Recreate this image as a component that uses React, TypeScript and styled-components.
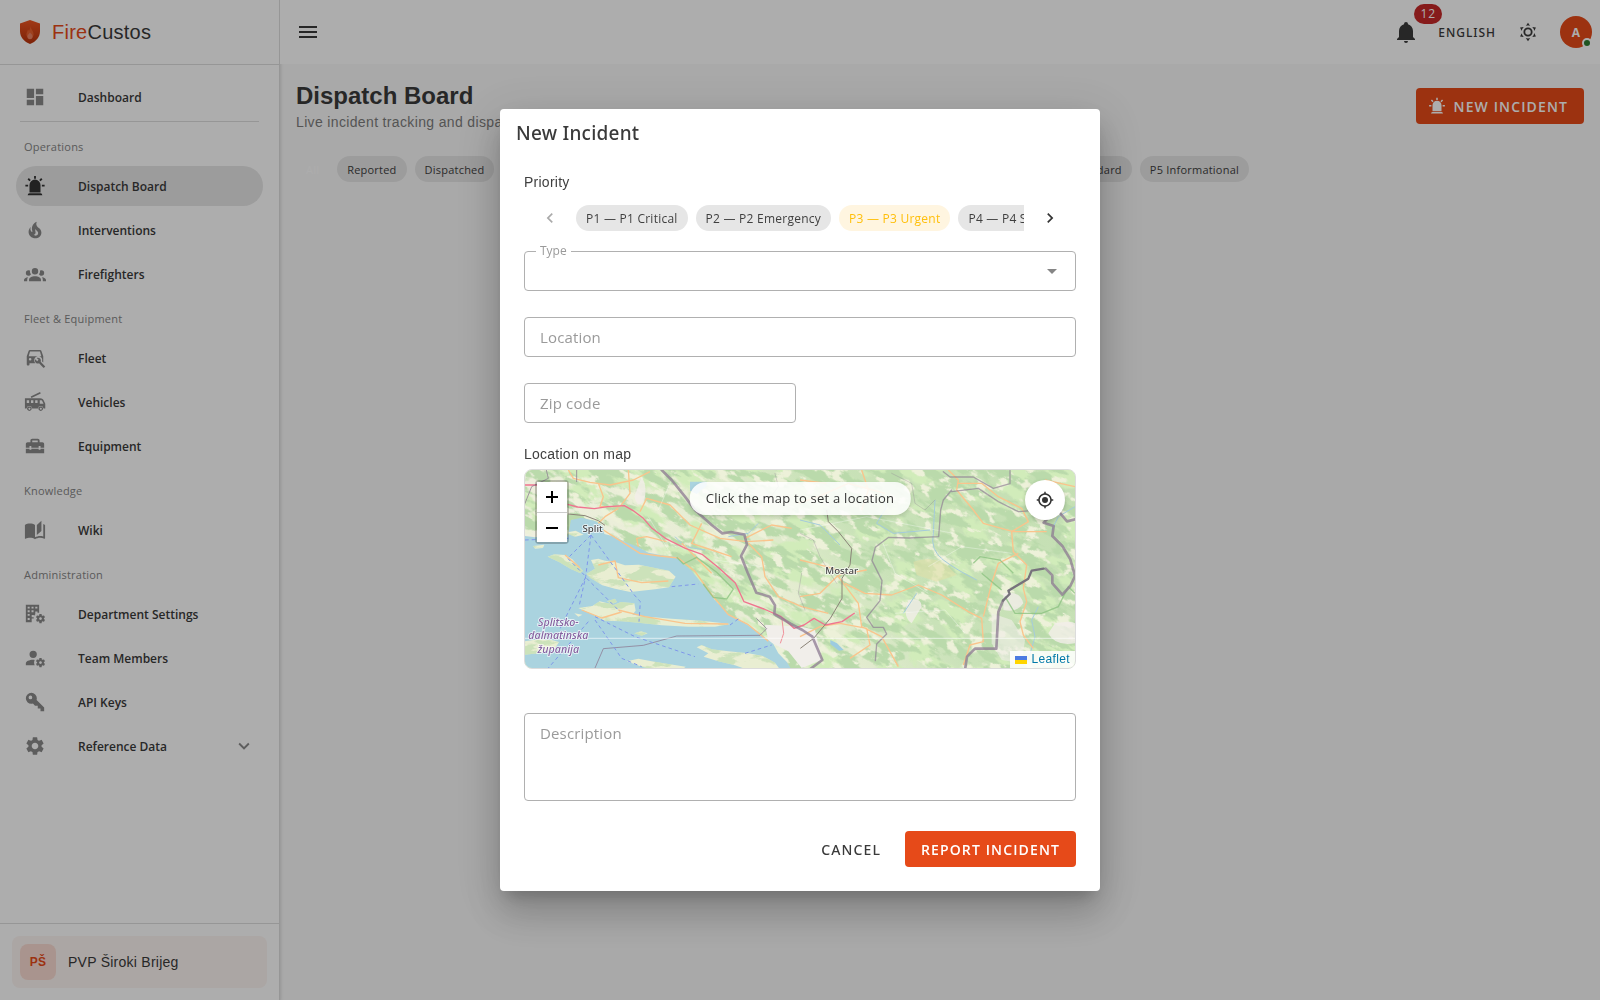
import React from "react";
import styled, { createGlobalStyle } from "styled-components";
import { MdSettings } from "react-icons/md";

const sans = `"Open Sans", "Noto Sans", sans-serif`;
const medium = `"Noto Sans", "Open Sans", sans-serif`;
const heading = `"Liberation Sans", Arial, sans-serif`;
const primary = "#e64a19";

const Global = createGlobalStyle`
  *, *::before, *::after { box-sizing: border-box; }
  body { margin: 0; background: #fafafa; color: #3a3a3a; font-family: ${sans}; font-size: 14px; }
  button, input, select, textarea { font: inherit; color: inherit; margin: 0; }
  button { border: 0; background: none; padding: 0; cursor: pointer; }
  a { color: inherit; text-decoration: none; }
  h1, h2, p { margin: 0; }
`;

/* ---------- icons ---------- */

const COG =
  "M17 12C16.87 12 16.76 12.09 16.74 12.21L16.55 13.53C16.25 13.66 15.96 13.82 15.7 14L14.46 13.5C14.35 13.5 14.22 13.5 14.15 13.63L13.15 15.36C13.09 15.47 13.11 15.6 13.21 15.68L14.27 16.5C14.25 16.67 14.24 16.83 14.24 17C14.24 17.17 14.25 17.33 14.27 17.5L13.21 18.32C13.12 18.4 13.09 18.53 13.15 18.64L14.15 20.37C14.21 20.5 14.34 20.5 14.46 20.5L15.7 20C15.96 20.18 16.24 20.35 16.55 20.47L16.74 21.79C16.76 21.91 16.86 22 17 22H19C19.11 22 19.22 21.91 19.24 21.79L19.43 20.47C19.73 20.34 20 20.18 20.27 20L21.5 20.5C21.63 20.5 21.76 20.5 21.83 20.37L22.83 18.64C22.89 18.53 22.86 18.4 22.77 18.32L21.7 17.5C21.72 17.33 21.74 17.17 21.74 17C21.74 16.83 21.73 16.67 21.7 16.5L22.76 15.68C22.85 15.6 22.88 15.47 22.82 15.36L21.82 13.63C21.76 13.5 21.63 13.5 21.5 13.5L20.27 14C20 13.82 19.73 13.65 19.42 13.53L19.23 12.21C19.22 12.09 19.11 12 19 12H17M18 15.5C18.83 15.5 19.5 16.17 19.5 17C19.5 17.83 18.83 18.5 18 18.5C17.16 18.5 16.5 17.83 16.5 17C16.5 16.17 17.17 15.5 18 15.5Z";

const paths = {
  dashboard: "M13,3V9H21V3M13,21H21V11H13M3,21H11V15H3M3,13H11V3H3V13Z",
  alarm:
    "M6,6.9L3.87,4.78L5.28,3.37L7.4,5.5L6,6.9M13,1V4H11V1H13M20.13,4.78L18,6.9L16.6,5.5L18.72,3.37L20.13,4.78M4.5,10.5V12.5H1.5V10.5H4.5M19.5,10.5H22.5V12.5H19.5V10.5M6,20H18A2,2 0 0,1 20,22H4A2,2 0 0,1 6,20M12,5A6,6 0 0,1 18,11V19H6V11A6,6 0 0,1 12,5Z",
  fire: "M17.66 11.2C17.43 10.9 17.15 10.64 16.89 10.38C16.22 9.78 15.46 9.35 14.82 8.72C13.33 7.26 13 4.85 13.95 3C13 3.23 12.17 3.75 11.46 4.32C8.87 6.4 7.85 10.07 9.07 13.22C9.11 13.32 9.15 13.42 9.15 13.55C9.15 13.77 9 13.97 8.8 14.05C8.57 14.15 8.33 14.09 8.14 13.93C8.08 13.88 8.04 13.83 8 13.76C6.87 12.33 6.69 10.28 7.45 8.64C5.78 10 4.87 12.3 5 14.47C5.06 14.97 5.12 15.47 5.29 15.97C5.43 16.57 5.7 17.17 6 17.7C7.08 19.43 8.95 20.67 10.96 20.92C13.1 21.19 15.39 20.8 17.03 19.32C18.86 17.66 19.5 15 18.56 12.72L18.43 12.46C18.22 12 17.66 11.2 17.66 11.2M14.5 17.5C14.22 17.74 13.76 18 13.4 18.1C12.28 18.5 11.16 17.94 10.5 17.28C11.69 17 12.4 16.12 12.61 15.23C12.78 14.43 12.46 13.77 12.33 13C12.21 12.26 12.23 11.63 12.5 10.94C12.69 11.32 12.89 11.7 13.13 12C13.9 13 15.11 13.44 15.37 14.8C15.41 14.94 15.43 15.08 15.43 15.23C15.46 16.05 15.1 16.95 14.5 17.5H14.5Z",
  group:
    "M12,5.5A3.5,3.5 0 0,1 15.5,9A3.5,3.5 0 0,1 12,12.5A3.5,3.5 0 0,1 8.5,9A3.5,3.5 0 0,1 12,5.5M5,8C5.56,8 6.08,8.15 6.53,8.42C6.38,9.85 6.8,11.27 7.66,12.38C7.16,13.34 6.16,14 5,14A3,3 0 0,1 2,11A3,3 0 0,1 5,8M19,8A3,3 0 0,1 22,11A3,3 0 0,1 19,14C17.84,14 16.84,13.34 16.34,12.38C17.2,11.27 17.62,9.85 17.47,8.42C17.92,8.15 18.44,8 19,8M5.5,18.25C5.5,16.18 8.41,14.5 12,14.5C15.59,14.5 18.5,16.18 18.5,18.25V20H5.5V18.25M0,20V18.5C0,17.11 1.89,15.94 4.45,15.6C3.86,16.28 3.5,17.22 3.5,18.25V20H0M24,20H20.5V18.25C20.5,17.22 20.14,16.28 19.55,15.6C22.11,15.94 24,17.11 24,18.5V20Z",
  fleet:
    "M6.500 3.200C5.800 3.200 5.300 3.600 5.100 4.200L3 10.200V19.200C3 19.800 3.400 20.200 4 20.200H5C5.600 20.200 6 19.800 6 19.200V17.700H12.400C11.200 16.400 10.900 14.600 11.400 13.100C11.900 11.600 13 10.500 14.600 10.100H5.100L6.600 5H17.400L18.900 10.100H16.600C18.400 10.500 19.800 12 19.900 13.800C19.900 14.400 19.800 15 19.600 15.500L21 16.800V10.200L18.900 4.200C18.700 3.600 18.200 3.200 17.500 3.200H6.500M6.700 12A1.400 1.400 0 0 1 8.100 13.400A1.400 1.400 0 0 1 6.700 14.800A1.400 1.400 0 0 1 5.300 13.400A1.400 1.400 0 0 1 6.700 12M22.900 20.900L18.200 16.200C18.700 15 18.400 13.600 17.500 12.600C16.500 11.600 15 11.400 13.800 11.900L15.900 14L14.400 15.500L12.200 13.400C11.600 14.600 11.900 16.100 12.900 17.100C13.800 18 15.200 18.300 16.400 17.800L21.100 22.500C21.300 22.700 21.600 22.700 21.800 22.500L22.900 21.500C23.200 21.300 23.200 21 22.900 20.900Z",
  truck:
    "M7.300 6L17.500 1.200L18.300 2.600L8.100 7.500ZM1 8H17.500C20 8 21 9 21.800 11L23.200 14V19H21.300A3.100 3.100 0 0 0 15.200 19H8.900A3.100 3.100 0 0 0 2.800 19H1ZM3 10.200V13.200H5.600V10.200ZM7.600 10.200V13.200H10.200V10.200ZM12.200 10.200V13.200H14.800V10.200ZM17.200 10.200V14H21.300L20 11.200C19.600 10.400 19.300 10.200 18.500 10.200ZM5.900 16.800A2.500 2.500 0 1 1 5.800 16.800ZM5.900 18.300A1 1 0 1 0 6 18.300ZM18.300 16.800A2.500 2.500 0 1 1 18.200 16.800ZM18.300 18.300A1 1 0 1 0 18.400 18.300Z",
  toolbox:
    "M18 16H16V15H8V16H6V15H2V20H22V15H18V16M20 8H17V6C17 4.9 16.1 4 15 4H9C7.9 4 7 4.9 7 6V8H4C2.9 8 2 8.9 2 10V14H6V12H8V14H16V12H18V14H22V10C22 8.9 21.1 8 20 8M15 8H9V6H15V8Z",
  book: "M19 2L14 6.5V17.5L19 13V2M6.5 5C4.55 5 2.45 5.4 1 6.5V21.16C1 21.41 1.25 21.66 1.5 21.66C1.6 21.66 1.65 21.59 1.75 21.59C3.1 20.94 5.05 20.5 6.5 20.5C8.45 20.5 10.55 20.9 12 22C13.35 21.15 15.8 20.5 17.5 20.5C19.15 20.5 20.85 20.81 22.25 21.56C22.35 21.61 22.4 21.59 22.5 21.59C22.75 21.59 23 21.34 23 21.09V6.5C22.4 6.05 21.75 5.75 21 5.5V19C19.9 18.65 18.7 18.5 17.5 18.5C15.8 18.5 13.35 19.15 12 20V6.5C10.55 5.4 8.45 5 6.5 5Z",
  building:
    "M2 2H16.5V10.6H14.7V9.4H12.3V12.2L10.8 14.2V13H8.4V15.6H10.6V17H8.4V21H2ZM4 4V6H6.2V4ZM8.2 4V6H10.4V4ZM12.3 4V6H14.6V4ZM4 8V10H6.2V8ZM8.2 8V10H10.4V8ZM4 12V14H6.2V12ZM4 16.4V18.6H6.2V16.4Z " + COG,
  accountCog:
    "M10 4A4 4 0 0 0 6 8A4 4 0 0 0 10 12A4 4 0 0 0 14 8A4 4 0 0 0 10 4M10 14C5.58 14 2 15.79 2 18V20H11.68A7 7 0 0 1 11 17A7 7 0 0 1 11.64 14.09C11.11 14.03 10.56 14 10 14Z " + COG,
  key: "M22,18V22H18V19H15V16H12L9.74,13.74C9.19,13.91 8.61,14 8,14A6,6 0 0,1 2,8A6,6 0 0,1 8,2A6,6 0 0,1 14,8C14,8.61 13.91,9.19 13.74,9.74L22,18M7,5A2,2 0 0,0 5,7A2,2 0 0,0 7,9A2,2 0 0,0 9,7A2,2 0 0,0 7,5Z",
  down: "M7.41,8.58L12,13.17L16.59,8.58L18,10L12,16L6,10L7.41,8.58Z",
  left: "M15.41,16.58L10.83,12L15.41,7.41L14,6L8,12L14,18L15.41,16.58Z",
  right: "M8.59,16.58L13.17,12L8.59,7.41L10,6L16,12L10,18L8.59,16.58Z",
  menu: "M3,6H21V8H3V6M3,11H21V13H3V11M3,16H21V18H3V16Z",
  bell: "M21,19V20H3V19L5,17V11C5,7.9 7.03,5.17 10,4.29C10,4.19 10,4.1 10,4A2,2 0 0,1 12,2A2,2 0 0,1 14,4C14,4.1 14,4.19 14,4.29C16.97,5.17 19,7.9 19,11V17L21,19M14,21A2,2 0 0,1 12,23A2,2 0 0,1 10,21",
  sun: "M12,7A5,5 0 0,1 17,12A5,5 0 0,1 12,17A5,5 0 0,1 7,12A5,5 0 0,1 12,7M12,9A3,3 0 0,0 9,12A3,3 0 0,0 12,15A3,3 0 0,0 15,12A3,3 0 0,0 12,9M12,2L14.39,5.42C13.65,5.15 12.84,5 12,5C11.16,5 10.35,5.15 9.61,5.42L12,2M3.34,7L7.5,6.65C6.9,7.16 6.36,7.78 5.94,8.5C5.5,9.24 5.25,10 5.11,10.79L3.34,7M3.36,17L5.12,13.23C5.26,14 5.53,14.78 5.95,15.5C6.37,16.24 6.91,16.86 7.5,17.37L3.36,17M20.65,7L18.88,10.79C18.74,10 18.47,9.23 18.05,8.5C17.63,7.78 17.1,7.15 16.5,6.64L20.65,7M20.64,17L16.5,17.36C17.09,16.85 17.62,16.22 18.04,15.5C18.46,14.77 18.73,14 18.87,13.21L20.64,17M12,22L9.59,18.56C10.33,18.83 11.14,19 12,19C12.82,19 13.63,18.83 14.37,18.56L12,22Z",
  gps: "M12,8A4,4 0 0,1 16,12A4,4 0 0,1 12,16A4,4 0 0,1 8,12A4,4 0 0,1 12,8M3.05,13H1V11H3.05C3.5,6.83 6.83,3.5 11,3.05V1H13V3.05C17.17,3.5 20.5,6.83 20.95,11H23V13H20.95C20.5,17.17 17.17,20.5 13,20.95V23H11V20.95C6.83,20.5 3.5,17.17 3.05,13M12,5A7,7 0 0,0 5,12A7,7 0 0,0 12,19A7,7 0 0,0 19,12A7,7 0 0,0 12,5Z",
  caret: "M7,10L12,15L17,10H7Z",
};

type IconName = keyof typeof paths;

const Svg = styled.svg`
  display: block;
  flex: none;
`;

const Icon = ({ name, size = 24 }: { name: IconName; size?: number }) => (
  <Svg width={size} height={size} viewBox="0 0 24 24" fill="currentColor" fillRule="evenodd" aria-hidden="true">
    <path d={paths[name]} />
  </Svg>
);

/* ---------- shell ---------- */

const Shell = styled.div`
  display: flex;
  min-height: 100vh;
`;

const Sidebar = styled.aside`
  width: 280px;
  flex: none;
  display: flex;
  flex-direction: column;
  background: #fff;
  border-right: 1px solid #dedede;
  box-shadow: 0 2px 4px rgba(0, 0, 0, 0.2);
`;

const Brand = styled.a`
  display: flex;
  align-items: center;
  gap: 12px;
  height: 65px;
  padding: 0 20px;
  border-bottom: 1px solid #dedede;
  font-family: ${heading};
  font-size: 20px;
  letter-spacing: 0.0125em;
  color: #3a3a3a;
  em {
    font-style: normal;
    color: ${primary};
  }
`;

const Nav = styled.nav`
  flex: 1;
  padding: 12px 16px;
`;

const NavItem = styled.a<{ $active?: boolean }>`
  display: flex;
  align-items: center;
  height: 40px;
  margin-bottom: 4px;
  padding: 0 8px;
  border-radius: 20px;
  background: ${(p) => (p.$active ? "#e6e6e6" : "transparent")};
  color: ${(p) => (p.$active ? "#333" : "#8a8a8a")};
  font-size: 12px;
  font-weight: 600;
`;

const NavText = styled.span`
  flex: 1;
  margin-left: 32px;
  color: #3a3a3a;
`;

const NavDivider = styled.hr`
  margin: 0 4px 4px;
  border: 0;
  border-top: 1px solid #dedede;
`;

const NavHeading = styled.h2`
  height: 40px;
  padding-left: 8px;
  font-size: 11px;
  font-weight: 400;
  letter-spacing: 0.02em;
  line-height: 42px;
  color: #858585;
`;

const Account = styled.div`
  padding: 12px;
  border-top: 1px solid #dedede;
`;

const AccountButton = styled.button`
  display: flex;
  align-items: center;
  gap: 12px;
  width: 100%;
  padding: 8px;
  border-radius: 8px;
  background: #fdf5f2;
  font-family: ${heading};
  font-size: 14px;
  letter-spacing: 0.018em;
`;

const AccountBadge = styled.span`
  display: grid;
  place-items: center;
  width: 36px;
  height: 36px;
  border-radius: 8px;
  background: #fadbd1;
  color: ${primary};
  font-size: 12px;
  font-weight: 700;
`;

const Main = styled.div`
  flex: 1;
  min-width: 0;
`;

const TopBar = styled.header`
  display: flex;
  align-items: center;
  height: 64px;
  padding: 0 8px 0 16px;
  background: #fff;
  color: #3a3a3a;
`;

const IconButton = styled.button`
  position: relative;
  display: grid;
  place-items: center;
  width: 24px;
  height: 24px;
`;

const Tools = styled.div`
  display: flex;
  align-items: center;
  gap: 20px;
  margin-left: auto;
`;

const Count = styled.span`
  position: absolute;
  left: 20px;
  bottom: 20px;
  min-width: 28px;
  height: 20px;
  border-radius: 10px;
  background: #c62828;
  color: #fff;
  font-size: 12px;
  letter-spacing: 0.08em;
  line-height: 20px;
  text-align: center;
`;

const Language = styled.button`
  font-family: ${medium};
  font-size: 12px;
  font-weight: 500;
  letter-spacing: 0.08em;
`;

const Avatar = styled.button`
  position: relative;
  width: 32px;
  height: 32px;
  border-radius: 50%;
  background: ${primary};
  color: #fff;
  font-size: 12px;
  font-weight: 700;
  &::after {
    content: "";
    position: absolute;
    right: 0;
    bottom: 0;
    width: 10px;
    height: 10px;
    border: 2px solid #fff;
    border-radius: 50%;
    background: #2e7d32;
  }
`;

const Page = styled.main`
  padding: 16px;
`;

const PageHead = styled.div`
  display: flex;
  align-items: center;
  justify-content: space-between;
  margin-bottom: 24px;
`;

const PageTitle = styled.h1`
  font-family: ${heading};
  font-size: 24px;
  font-weight: 700;
  line-height: 32px;
  color: #3a3a3a;
`;

const PageNote = styled.p`
  font-family: ${heading};
  font-size: 14px;
  letter-spacing: 0.025em;
  line-height: 20px;
  color: #7d7d7d;
`;

const SolidButton = styled.button<{ $icon?: boolean }>`
  display: inline-flex;
  align-items: center;
  gap: 8px;
  height: 36px;
  padding: 0 16px 0 ${(p) => (p.$icon ? "12px" : "16px")};
  border-radius: 4px;
  background: ${primary};
  color: #fff;
  font-size: 14px;
  font-weight: 600;
  letter-spacing: 0.08em;
`;

const TextButton = styled(SolidButton)`
  background: transparent;
  color: #3a3a3a;
  font-family: ${medium};
  font-weight: 500;
`;

const ChipRow = styled.div`
  display: flex;
  justify-content: space-between;
  max-width: 953px;
`;

const ChipGroup = styled.div`
  display: flex;
  gap: 8px;
`;

const Chip = styled.button<{ $tone?: "ghost" | "amber"; $size?: number }>`
  flex: none;
  height: 26px;
  padding: 0 10px;
  border-radius: 13px;
  font-size: ${(p) => p.$size ?? 11}px;
  white-space: nowrap;
  letter-spacing: 0.02em;
  background: ${(p) => (p.$tone === "ghost" ? "transparent" : p.$tone === "amber" ? "#fff5e0" : "#e6e6e6")};
  color: ${(p) => (p.$tone === "ghost" ? "#fff" : p.$tone === "amber" ? "#ffbf0a" : "#3f3f3f")};
`;

const Empty = styled.p`
  margin-top: 224px;
  text-align: center;
  font-family: ${heading};
  font-size: 16px;
  color: #555;
`;

/* ---------- dialog ---------- */

const Scrim = styled.div`
  position: fixed;
  inset: 0;
  display: grid;
  place-items: center;
  background: rgba(0, 0, 0, 0.32);
`;

const Dialog = styled.section`
  width: min(600px, 100% - 48px);
  border-radius: 4px;
  background: #fff;
  box-shadow: 0 11px 15px -7px rgba(0, 0, 0, 0.2), 0 24px 38px 3px rgba(0, 0, 0, 0.14),
    0 9px 46px 8px rgba(0, 0, 0, 0.12);
`;

const DialogTitle = styled.h2`
  padding: 8px 16px;
  font-family: ${medium};
  font-size: 19px;
  font-weight: 500;
  letter-spacing: 0.0125em;
  line-height: 32px;
  color: #3a3a3a;
`;

const Form = styled.form`
  display: flex;
  flex-direction: column;
  padding: 16px 24px 24px;
`;

const Caption = styled.p`
  font-family: ${heading};
  font-size: 14px;
  letter-spacing: 0.018em;
  line-height: 18px;
  color: #3f3f3f;
`;

const Slider = styled.div`
  display: grid;
  grid-template-columns: 52px 1fr 52px;
  align-items: center;
  margin: 14px 0 20px;
`;

const Arrow = styled.button<{ $dim?: boolean }>`
  display: grid;
  place-items: center;
  height: 26px;
  color: ${(p) => (p.$dim ? "#aaa" : "#333")};
`;

const Track = styled.div`
  display: flex;
  gap: 8px;
  overflow: hidden;
`;

const Field = styled.div<{ $half?: boolean }>`
  position: relative;
  width: ${(p) => (p.$half ? "272px" : "100%")};
  margin-bottom: ${(p) => (p.$half ? "22px" : "26px")};
`;

const outline = `
  display: block;
  width: 100%;
  border: 1px solid #b0b0b0;
  border-radius: 4px;
  background: transparent;
  padding: 0 15px;
  font-size: 15px;
  letter-spacing: 0.01em;
  outline: none;
  &::placeholder { color: #9a9a9a; opacity: 1; }
`;

const Input = styled.input`
  ${outline}
  height: 40px;
`;

const Select = styled.select`
  ${outline}
  height: 40px;
  appearance: none;
`;

const Area = styled.textarea`
  ${outline}
  height: 88px;
  padding: 7px 15px;
  line-height: 24px;
  resize: none;
`;

const FloatLabel = styled.label`
  position: absolute;
  top: -8px;
  left: 12px;
  padding: 0 4px;
  background: #fff;
  color: #9a9a9a;
  font-size: 12px;
  line-height: 16px;
`;

const CaretBox = styled.span`
  position: absolute;
  top: 8px;
  right: 12px;
  color: #858585;
  pointer-events: none;
`;

const Actions = styled.div`
  display: flex;
  justify-content: flex-end;
  gap: 8px;
  margin-top: 4px;
`;

/* ---------- map ---------- */

const MapBox = styled.div`
  position: relative;
  height: 200px;
  margin: 6px 0 44px;
  border: 1px solid #dcdcdc;
  border-radius: 8px;
  overflow: hidden;
`;

const MapSvg = styled.svg`
  display: block;
  width: 100%;
  height: 100%;
`;

const ZoomBar = styled.div`
  position: absolute;
  top: 10px;
  left: 10px;
  border: 2px solid rgba(0, 0, 0, 0.22);
  border-radius: 4px;
  background-clip: padding-box;
`;

const ZoomButton = styled.button`
  display: grid;
  place-items: center;
  width: 30px;
  height: 30px;
  background: #fff;
  color: #000;
  & + & {
    border-top: 1px solid #ccc;
  }
`;

const MapHint = styled.div`
  position: absolute;
  top: 12px;
  left: 50%;
  transform: translateX(-50%);
  padding: 0 16px;
  border-radius: 16px;
  background: rgba(255, 255, 255, 0.86);
  box-shadow: 0 2px 4px rgba(0, 0, 0, 0.14);
  font-size: 13px;
  letter-spacing: 0.018em;
  line-height: 33px;
  white-space: nowrap;
  color: #333;
`;

const Locate = styled.button`
  position: absolute;
  top: 10px;
  right: 10px;
  display: grid;
  place-items: center;
  width: 40px;
  height: 40px;
  border-radius: 50%;
  background: #fff;
  box-shadow: 0 2px 4px rgba(0, 0, 0, 0.2);
  color: #333;
`;

const Attribution = styled.a`
  position: absolute;
  right: 0;
  bottom: 0;
  display: flex;
  align-items: center;
  gap: 4px;
  padding: 0 5px;
  background: rgba(255, 255, 255, 0.85);
  color: #0078a8;
  font-family: ${heading};
  font-size: 12px;
  letter-spacing: 0.03em;
  line-height: 17px;
`;

const SEA =
  "M30 288L60 292 110 288 158 290 168 240 200 233 240 243 264 258 268 282 300 290 330 305 368 320 400 338 440 346 482 350 505 372 530 392 560 430 580 455 597 478 640 522 690 550 735 580 775 612 790 640 815 665 830 690H30Z";
const ISLANDS =
  "M98 350L118 343 150 345 172 358 190 378 204 392 196 400 166 386 132 366ZM214 402L240 386 228 360 250 356 270 362 300 366 330 376 372 374 420 384 462 392 482 410 470 428 462 442 420 448 380 452 346 456 300 446 262 436 226 414ZM190 504L232 498 254 484 298 494 318 486 358 490 362 512 352 524 400 530 470 536 560 542 646 552 600 560 520 560 440 556 370 548 320 544 270 542 230 522ZM276 484L300 476 306 486 290 492ZM358 580L378 574 398 580 380 587ZM545 622L560 615 590 628 640 634 700 640 744 648 780 668 796 690H700L660 676 610 664 566 650 580 640ZM30 604L70 598 110 600 132 606 118 628 70 640 30 644ZM335 664L370 656 410 664 460 672 512 680 500 690H420L380 680ZM54 318L88 314 84 324 60 326ZM150 278L182 272 206 284 180 290ZM178 520L202 524 190 530Z";

const RegionMap = () => (
  <MapSvg viewBox="30 90 1650 594" preserveAspectRatio="xMidYMid slice" role="img" aria-label="Map of Dalmatia and Herzegovina">
    <defs>
      <filter id="forest" x="0" y="0" width="100%" height="100%" colorInterpolationFilters="sRGB">
        <feTurbulence type="fractalNoise" baseFrequency="0.012 0.03" numOctaves="5" seed="11" />
        <feColorMatrix values="0 0 0 0 .73  0 0 0 0 .855  0 0 0 0 .67  12 0 0 0 -5.7" />
        <feComposite in2="SourceGraphic" operator="in" />
      </filter>
      <filter id="meadow" x="0" y="0" width="100%" height="100%" colorInterpolationFilters="sRGB">
        <feTurbulence type="fractalNoise" baseFrequency="0.008 0.014" numOctaves="5" seed="4" />
        <feColorMatrix values="0 0 0 0 .82  0 0 0 0 .925  0 0 0 0 .73  0 10 0 0 -4.8" />
        <feComposite in2="SourceGraphic" operator="in" />
      </filter>
      <filter id="clearing" x="0" y="0" width="100%" height="100%" colorInterpolationFilters="sRGB">
        <feTurbulence type="fractalNoise" baseFrequency="0.02 0.036" numOctaves="5" seed="23" />
        <feColorMatrix values="0 0 0 0 .93  0 0 0 0 .945  0 0 0 0 .85  0 0 12 0 -7" />
        <feComposite in2="SourceGraphic" operator="in" />
      </filter>
      <linearGradient id="land" x1="0" y1="0.3" x2="1" y2="0">
        <stop offset="0" stopColor="#efefdf" />
        <stop offset=".35" stopColor="#e6edd2" />
        <stop offset=".55" stopColor="#c9e2b8" />
        <stop offset="1" stopColor="#c4dfb3" />
      </linearGradient>
      <clipPath id="isles">
        <path d={ISLANDS} />
      </clipPath>
    </defs>
    <rect x="30" y="90" width="1650" height="594" fill="url(#land)" />
    <g transform="rotate(28 855 387)">
      <rect x="-100" y="-500" width="1900" height="1800" filter="url(#meadow)" />
      <rect x="-100" y="-500" width="1900" height="1800" filter="url(#forest)" />
      <rect x="-100" y="-500" width="1900" height="1800" filter="url(#clearing)" />
    </g>
    <path d="M380 110q18 30 8 70q-20 30-30-10zM1180 480q40-10 40 20l-30 50q-30-20-10-70M1465 460q50-10 60 30q-20 30-60 20zM1620 550q50-10 60 0v60q-60 10-80-30z" fill="#f2eeea" opacity=".8" />
    <path d="M1430 520l60 20 40 60-10 70-60-10-30-50z" fill="#f2eeea" opacity=".6" />
    <path d="M1195 365q60-20 100 10l30 30-60 20-60-20z" fill="#dfdfa8" opacity=".6" />
    <path d="M860 560l40 10 20 90-60 24-40-50-60-30-10-50z" fill="#f1eeea" />

    <path d={SEA} fill="#aad3df" />
    <path d={ISLANDS} fill="#e9eed2" />
    <g clipPath="url(#isles)">
      <rect x="30" y="280" width="900" height="404" filter="url(#forest)" opacity=".6" />
    </g>
    <path d="M525 125h50v12l-30 25-20-10z" fill="#aad3df" />
    <path d="M946 600l20 10 20 20-14 2-26-20z" fill="#9ccbe0" />

    <g fill="none" stroke="#a5cbdc" strokeWidth="3">
      <path d="M480 290l30 30 60 10M640 290l60-10 30-30M1095 160l20 40-30 50 50 30 110-10M1260 180l-5 100q-10 50 30 80t100 60M1680 200l-50 30-20 40M1540 660l20-70-10-50 20-40M855 240l60 15 60 60M1205 460l-20 30-20 30" />
    </g>

    <g fill="none" stroke="#fac48c" strokeWidth="4" strokeLinejoin="round">
      <path d="M160 90l15 25 50 12 60 8 70-15 50-25M250 130l15 40-10 30 60 0M340 90l5 70-30 40M375 215l20-40 70 20 60 60 90 40 80 10 80-5" />
      <path d="M250 250l20-20 40-25M265 270l110 70 60 8 55 6 50 40 50 70 50 60 60 30 60 50M370 320l-5-25 30-5 60 15M500 310l90 90" />
      <path d="M690 295l80-40 60 10M700 310l40 40 10 60 40 60 70 30 80 20M560 250l-30 60 60 20 60 20" />
      <path d="M855 360l80 20 60 20 60-10M855 470l60-10 50-50 20-10M990 430l60 30 80 5 80-30 70 30 80 50 40 20 5 70-40 10-20 60M970 410l60 80 10 70 60 30 50 90M855 590l60-30 60-10 80 15 10 50-60 40" />
      <path d="M1300 90l30 30-5 30 50 60 30 40 90 25 100 0M1330 130l70 0 50 40 70 35 20 40-50 30 5 60 40 40-10 70 10 40-20 60 10 40 30 40M1510 340l-60 30-20 60-25 100" />
      <path d="M250 375l50-12 10 50 70 15 80-5M310 510l80 20 120 20 130 2M850 190l60-20 90-40 110 30M1040 90l20 60-20 60M1590 120l90 20M855 120l80 10" />
      <path d="M150 345l45 38M200 510l60 24 60-18" />
    </g>
    <g fill="none" stroke="#fff" strokeWidth="2" opacity=".5">
      <path d="M855 270l200-40 260 50M1100 300l40 100 100 60M1240 380l100-60 150 20M400 230l60 100M600 360l140 20M1140 520l150-10 60 70M470 120l-40 90" />
    </g>
    <g fill="none" stroke="#f0748f" strokeWidth="4" strokeLinejoin="round">
      <path d="M30 135h55M158 193l30 8 50 5 40-6 50-3 25 14 30 22 28 32 40 30 60 30 50 18 50 40 50 46 26 56 60 22 50 22 40 36 30-10 30-20 34 20 50-10 38-26" />
    </g>
    <path d="M800 530l6 50-10 30" fill="none" stroke="#f0909a" strokeWidth="3" />
    <path d="M160 222l50 5 40 15 20 14M935 210l5 35 30 30 40 50-5 50-24 40 0 60-35 60-50 60-40 30" fill="none" stroke="#8b8378" strokeWidth="3" />
    <path d="M485 352l20 20 40-20 60 45 50 50-20 30-40-5-30-40M1375 370l20-20 60 10 40 40M1400 400l60 50M1470 470l30 50h80l50-20 30-60 20 20" fill="none" stroke="#8dc382" strokeWidth="4" opacity=".8" />

    <g fill="none" stroke="#8c7a92" strokeLinejoin="round" strokeLinecap="round">
      <path
        d="M440 90l30 30 40 50 30 40 50 45 32 25 26-4 40 8 8 30-18 34 20 50 26 60 40 12 16 26 -2 26 50 30 34 18 30 20 30 70-40 30"
        strokeWidth="8"
        opacity=".75"
      />
      <path d="M1350 690l6-40 24-24 64 0 6-110 14-34" strokeWidth="8" opacity=".75" />
      <path d="M1592 386l20 20 0 24 30 34 24-26 14-30-14-50-24-40-30-30 4-30-30-10 20-20 20-20 30 36 34-8" strokeWidth="8" opacity=".75" />
      <path d="M1464 482l20-20-4-10 60-36 10-24 36-6" strokeWidth="7" stroke="#77727c" />
      <path d="M1285 95l20 16 70 0 60 34 50-14 0-40M1310 150l-25 30-8 30-6 80-90 4-60-2-40 30-10 40 30 60-6 60-40 50 20 30 30 0 10 20-30 30-4 50M1310 155l80-10 60 40 60 30 50-4" strokeWidth="4" opacity=".65" />
      <path d="M240 684l25-58 120-10 100-28 250-2 20-20-30-30M30 190l20-50 50-25-6-25M185 90l0 35" strokeWidth="3" opacity=".75" />
      <path d="M855 280l40 20 20 50 30 50 20 30M780 100l10 40-30 40M860 400l-10 60 20 50M1130 100l60 30 10 60 30 20 30-30" strokeWidth="3" opacity=".3" />
    </g>

    <g fill="none" stroke="#7f97ea" strokeWidth="3" strokeDasharray="11 9">
      <path d="M228 285l-16 125-20 90M228 285l-70 70 50 50M228 285l130 180 18 20-4 60M212 412l-80 160M215 415l100 100M470 440l80-8M240 540l80 115 60 25M240 530l120 60 180 60M645 555l30-22M30 300l130-5M220 545l-120 139M690 640l80-25" />
    </g>
    <path d="M30 595h1650" stroke="#fff" strokeWidth="3" opacity=".6" />

    <g fontFamily={medium} stroke="#fff" strokeOpacity=".8" strokeWidth="5" paintOrder="stroke" textAnchor="middle" fontWeight="500">
      <text x="233" y="276" fontSize="29" fill="#444">Split</text>
      <text x="980" y="402" fontSize="29" fill="#444">Mostar</text>
      <g fontSize="32" fontStyle="italic" fill="#8461a0">
        <text x="130" y="558">Splitsko-</text>
        <text x="130" y="598">dalmatinska</text>
        <text x="130" y="638">županija</text>
      </g>
    </g>
  </MapSvg>
);

/* ---------- content ---------- */

type Entry = { label: string; icon: React.ReactNode; active?: boolean; expandable?: boolean };
const icon = (name: IconName) => <Icon name={name} size={22} />;

const sections: { title: string; items: Entry[] }[] = [
  {
    title: "Operations",
    items: [
      { label: "Dispatch Board", icon: icon("alarm"), active: true },
      { label: "Interventions", icon: icon("fire") },
      { label: "Firefighters", icon: icon("group") },
    ],
  },
  {
    title: "Fleet & Equipment",
    items: [
      { label: "Fleet", icon: icon("fleet") },
      { label: "Vehicles", icon: icon("truck") },
      { label: "Equipment", icon: icon("toolbox") },
    ],
  },
  { title: "Knowledge", items: [{ label: "Wiki", icon: icon("book") }] },
  {
    title: "Administration",
    items: [
      { label: "Department Settings", icon: icon("building") },
      { label: "Team Members", icon: icon("accountCog") },
      { label: "API Keys", icon: icon("key") },
      { label: "Reference Data", icon: <MdSettings size={22} />, expandable: true },
    ],
  },
];

const Item = ({ label, icon, active, expandable }: Entry) => (
  <NavItem href="#" $active={active}>
    {icon}
    <NavText>{label}</NavText>
    {expandable && <Icon name="down" size={22} />}
  </NavItem>
);

const Logo = () => (
  <Svg width="20" height="24" viewBox="0 0 20 24" aria-hidden="true">
    <defs>
      <linearGradient id="shield" x1="0" y1="0" x2="0" y2="1">
        <stop offset="0" stopColor="#ee5522" />
        <stop offset="1" stopColor="#b8330c" />
      </linearGradient>
    </defs>
    <path d="M10 0L20 3.4V11C20 17.4 15.8 21.8 10 24C4.2 21.8 0 17.4 0 11V3.4Z" fill="url(#shield)" />
    <path d="M10.3 5.500C10.6 9.2 13.6 10.6 13.6 14.8A3.7 4.3 0 0 1 6.4 14.8C6.4 12.4 7.6 11.6 8 9.6C8.6 10 8.8 10.4 9 11C9.9 9.6 10.4 7.800 10.3 5.500Z" fill="#e9602f" />
    <path d="M10 12.500C11 14 12.6 14.600 12.6 16.600A2.600 2.600 0 0 1 7.400 16.600C7.400 14.800 9 14 10 12.500Z" fill="#ec8262" />
  </Svg>
);

export default function App() {
  return (
    <>
      <Global />
      <Shell>
        <Sidebar>
          <Brand href="#">
            <Logo />
            <span>
              <em>Fire</em>Custos
            </span>
          </Brand>
          <Nav>
            <Item label="Dashboard" icon={icon("dashboard")} />
            <NavDivider />
            {sections.map((s) => (
              <React.Fragment key={s.title}>
                <NavHeading>{s.title}</NavHeading>
                {s.items.map((i) => (
                  <Item key={i.label} {...i} />
                ))}
              </React.Fragment>
            ))}
          </Nav>
          <Account>
            <AccountButton>
              <AccountBadge>PŠ</AccountBadge>
              PVP Široki Brijeg
            </AccountButton>
          </Account>
        </Sidebar>
        <Main>
          <TopBar>
            <IconButton aria-label="Menu">
              <Icon name="menu" />
            </IconButton>
            <Tools>
              <IconButton aria-label="Notifications">
                <Icon name="bell" />
                <Count>12</Count>
              </IconButton>
              <Language>ENGLISH</Language>
              <IconButton aria-label="Theme">
                <Icon name="sun" size={22} />
              </IconButton>
              <Avatar>A</Avatar>
            </Tools>
          </TopBar>
          <Page>
            <PageHead>
              <div>
                <PageTitle>Dispatch Board</PageTitle>
                <PageNote>Live incident tracking and dispatch</PageNote>
              </div>
              <SolidButton $icon>
                <Icon name="alarm" size={18} />
                NEW INCIDENT
              </SolidButton>
            </PageHead>
            <ChipRow>
              <ChipGroup>
                <Chip $tone="ghost">All</Chip>
                <Chip>Reported</Chip>
                <Chip>Dispatched</Chip>
              </ChipGroup>
              <ChipGroup>
                <Chip>P4 Standard</Chip>
                <Chip>P5 Informational</Chip>
              </ChipGroup>
            </ChipRow>
            <Empty>No active incidents match the current filters.</Empty>
          </Page>
        </Main>
      </Shell>
      <Scrim>
        <Dialog role="dialog" aria-modal="true" aria-labelledby="dialog-title">
          <DialogTitle id="dialog-title">New Incident</DialogTitle>
          <Form onSubmit={(e) => e.preventDefault()}>
            <Caption>Priority</Caption>
            <Slider>
              <Arrow type="button" $dim aria-label="Previous">
                <Icon name="left" size={20} />
              </Arrow>
              <Track>
                <Chip type="button" $size={12}>P1 — P1 Critical</Chip>
                <Chip type="button" $size={12}>P2 — P2 Emergency</Chip>
                <Chip type="button" $size={12} $tone="amber">P3 — P3 Urgent</Chip>
                <Chip type="button" $size={12}>P4 — P4 Standard</Chip>
              </Track>
              <Arrow type="button" aria-label="Next">
                <Icon name="right" size={20} />
              </Arrow>
            </Slider>
            <Field>
              <Select id="type" defaultValue="">
                <option value="" />
              </Select>
              <FloatLabel htmlFor="type">Type</FloatLabel>
              <CaretBox>
                <Icon name="caret" />
              </CaretBox>
            </Field>
            <Field>
              <Input aria-label="Location" placeholder="Location" />
            </Field>
            <Field $half>
              <Input aria-label="Zip code" placeholder="Zip code" />
            </Field>
            <Caption>Location on map</Caption>
            <MapBox>
              <RegionMap />
              <ZoomBar>
                <ZoomButton type="button" aria-label="Zoom in">
                  <Svg width="14" height="14" viewBox="0 0 14 14" stroke="#000" strokeWidth="2">
                    <path d="M7 1v12M1 7h12" />
                  </Svg>
                </ZoomButton>
                <ZoomButton type="button" aria-label="Zoom out">
                  <Svg width="14" height="14" viewBox="0 0 14 14" stroke="#000" strokeWidth="2">
                    <path d="M1 7h12" />
                  </Svg>
                </ZoomButton>
              </ZoomBar>
              <MapHint>Click the map to set a location</MapHint>
              <Locate type="button" aria-label="Use my location">
                <Icon name="gps" size={18} />
              </Locate>
              <Attribution href="#">
                <Svg width="12" height="8" viewBox="0 0 12 8" aria-hidden="true">
                  <path fill="#4c7be1" d="M0 0h12v4H0z" />
                  <path fill="#ffd500" d="M0 4h12v4H0z" />
                </Svg>
                Leaflet
              </Attribution>
            </MapBox>
            <Field>
              <Area aria-label="Description" placeholder="Description" />
            </Field>
            <Actions>
              <TextButton type="button">CANCEL</TextButton>
              <SolidButton type="submit">REPORT INCIDENT</SolidButton>
            </Actions>
          </Form>
        </Dialog>
      </Scrim>
    </>
  );
}
